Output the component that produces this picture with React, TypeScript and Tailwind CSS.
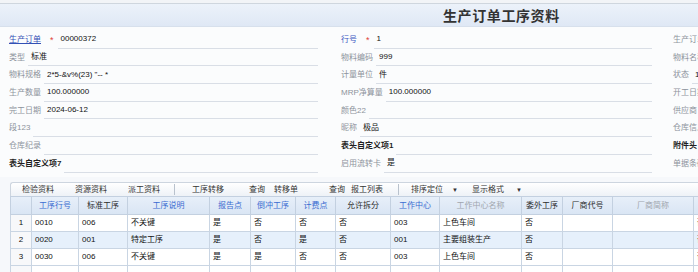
import React from 'react'

type Field = {
  label: string
  value?: string
  kind?: 'link' | 'blue' | 'bold'
  star?: boolean
}

const col1: Field[] = [
  { label: '生产订单', kind: 'link', star: true, value: '00000372' },
  { label: '类型', value: '标准' },
  { label: '物料规格', value: '2*5-&v%(23) "-- *' },
  { label: '生产数量', value: '100.000000' },
  { label: '完工日期', value: '2024-06-12' },
  { label: '段123' },
  { label: '仓库纪录' },
  { label: '表头自定义项7', kind: 'bold' },
]

const col2: Field[] = [
  { label: '行号', kind: 'blue', star: true, value: '1' },
  { label: '物料编码', value: '999' },
  { label: '计量单位', value: '件' },
  { label: 'MRP净算量', value: '100.000000' },
  { label: '颜色22' },
  { label: '昵称', value: '极品' },
  { label: '表头自定义项1', kind: 'bold' },
  { label: '启用流转卡', value: '是' },
]

const col3: Field[] = [
  { label: '生产订单号' },
  { label: '物料名称' },
  { label: '状态', value: '1' },
  { label: '开工日期' },
  { label: '供应商' },
  { label: '仓库信息' },
  { label: '附件头', kind: 'bold' },
  { label: '单据条码' },
]

const columns = [
  { title: '', w: 21, tone: '' },
  { title: '工序行号', w: 47, tone: 'blue' },
  { title: '标准工序', w: 49, tone: 'dark' },
  { title: '工序说明', w: 82, tone: 'blue' },
  { title: '报告点', w: 41, tone: 'blue' },
  { title: '倒冲工序', w: 45, tone: 'blue' },
  { title: '计费点', w: 40, tone: 'blue' },
  { title: '允许拆分', w: 55, tone: 'dark' },
  { title: '工作中心', w: 49, tone: 'blue' },
  { title: '工作中心名称', w: 82, tone: 'grey' },
  { title: '委外工序', w: 41, tone: 'dark' },
  { title: '厂商代号', w: 50, tone: 'dark' },
  { title: '厂商简称', w: 81, tone: 'grey' },
  { title: '备注', w: 40, tone: 'dark' },
]

const rows = [
  ['1', '0010', '006', '不关键', '是', '否', '否', '否', '003', '上色车间', '否', '', '', '否'],
  ['2', '0020', '001', '特定工序', '是', '否', '是', '否', '001', '主要组装生产', '否', '', '', '否'],
  ['3', '0030', '006', '不关键', '是', '是', '否', '否', '003', '上色车间', '否', '', '', '否'],
  ['', '', '', '', '', '', '', '', '', '', '', '', '', ''],
]

function FieldRow({ f }: { f: Field }) {
  const labelCls =
    f.kind === 'link'
      ? 'text-[#3350b5] underline'
      : f.kind === 'blue'
        ? 'text-[#3b58c2]'
        : f.kind === 'bold'
          ? 'text-[#1f1f1f] font-semibold'
          : 'text-[#8d939c]'
  return (
    <div className="flex h-[17.7px] items-stretch">
      <span className={`flex shrink-0 items-center whitespace-nowrap ${labelCls}`}>{f.label}</span>
      {f.star && <span className="ml-[9px] flex items-center text-[9px] text-[#e0403a]">*</span>}
      <div className={`${f.star ? 'ml-[4px]' : 'ml-[3px]'} flex min-w-0 flex-1 items-center border-b border-[#d9dee6] pl-[3px] whitespace-nowrap text-[#111]`}>
        {f.value}
      </div>
    </div>
  )
}

const headTone: Record<string, string> = {
  blue: 'text-[#3a6bd1]',
  dark: 'text-[#2b2b2b]',
  grey: 'text-[#a0a6ae]',
  '': '',
}

export default function App() {
  return (
    <div className="relative h-[272px] w-[698px] overflow-hidden bg-[#f6f8fb] font-['Liberation_Sans','Noto_Sans_CJK_SC',sans-serif] text-[8px] leading-[10px]">
      {/* 顶部细条 */}
      <div className="h-[4px] border-b border-[#cfd6de] bg-[#f2f4f7]" />

      {/* 标题 */}
      <div className="flex h-[23px] items-center border-b border-[#d7e0ec] bg-gradient-to-b from-[#ecf2fa] to-[#dfe8f5] pl-[443px]">
        <h1 className="whitespace-nowrap text-[14px] font-bold leading-[16px] tracking-[0.6px] text-[#333] font-['Noto_Sans_CJK_SC',sans-serif]">
          生产订单工序资料
        </h1>
      </div>

      {/* 表头字段 */}
      <div className="flex h-[150px] bg-[#fbfcfd] pl-[9px] pt-[4px]">
        <div className="w-[309px] shrink-0">
          {col1.map((f) => (
            <FieldRow key={f.label} f={f} />
          ))}
        </div>
        <div className="ml-[23px] w-[311px] shrink-0">
          {col2.map((f) => (
            <FieldRow key={f.label} f={f} />
          ))}
        </div>
        <div className="ml-[21px] w-[300px] shrink-0">
          {col3.map((f) => (
            <FieldRow key={f.label} f={f} />
          ))}
        </div>
      </div>

      {/* 工具栏 */}
      <div className="mt-[5px] ml-[10px] flex h-[14px] items-center rounded-tl-[3px] border-l border-t border-[#cdd5df] bg-gradient-to-b from-[#ffffff] to-[#eef2f7] whitespace-nowrap text-[#333]">
        <span className="ml-[11px]">检验资料</span>
        <span className="ml-[21px]">资源资料</span>
        <span className="ml-[21px]">派工资料</span>
        <span className="ml-[14px] h-[11px] w-px bg-[#b9c2cd]" />
        <span className="ml-[17px]">工序转移</span>
        <span className="ml-[25px]">查询</span>
        <span className="ml-[9px]">转移单</span>
        <span className="ml-[31px]">查询</span>
        <span className="ml-[6px]">报工列表</span>
        <span className="ml-[15px] h-[11px] w-px bg-[#b9c2cd]" />
        <span className="ml-[12px]">排序定位</span>
        <span className="ml-[9px] text-[6px]">▼</span>
        <span className="ml-[14px]">显示格式</span>
        <span className="ml-[12px] text-[6px]">▼</span>
      </div>

      {/* 表格 */}
      <div className="ml-[10px] w-[723px]">
        <table className="w-[723px] table-fixed border-collapse">
          <colgroup>
            {columns.map((c, i) => (
              <col key={i} style={{ width: c.w }} />
            ))}
          </colgroup>
          <thead>
            <tr className="h-[18px] bg-gradient-to-b from-[#e7eff9] to-[#d9e5f4]">
              {columns.map((c, i) => (
                <th
                  key={i}
                  className={`border border-[#c3d0e0] p-0 text-center font-normal whitespace-nowrap overflow-hidden ${headTone[c.tone]}`}
                >
                  {c.title}
                </th>
              ))}
            </tr>
          </thead>
          <tbody>
            {rows.map((r, ri) => (
              <tr key={ri} className={`h-[17px] ${ri === 1 ? 'bg-[#e6f0fb]' : 'bg-white'}`}>
                {r.map((v, ci) => (
                  <td
                    key={ci}
                    className={`border border-[#c9d5e3] p-0 whitespace-nowrap overflow-hidden text-[#111] ${
                      ci === 0 ? 'text-center bg-[#f7f8fa]' : 'pl-[3px]'
                    }`}
                  >
                    {v}
                  </td>
                ))}
              </tr>
            ))}
          </tbody>
        </table>
      </div>
    </div>
  )
}
